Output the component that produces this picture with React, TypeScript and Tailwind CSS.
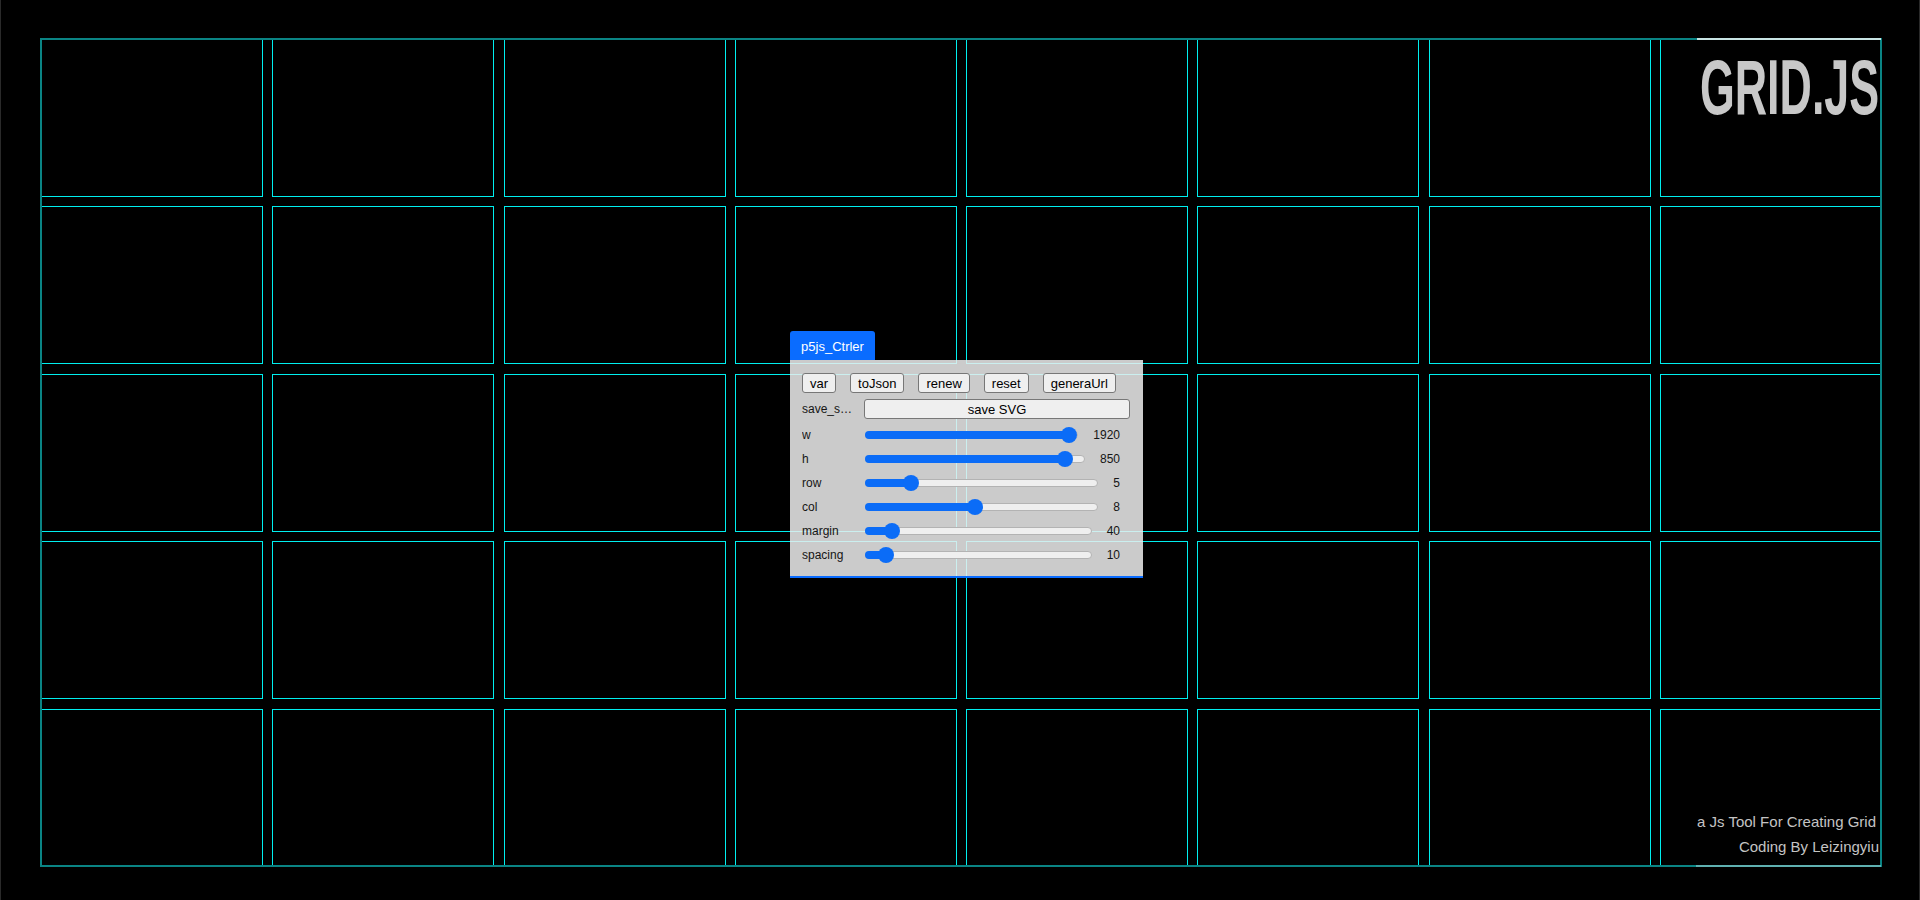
import React from "react";

// grid settings shown in the control panel
const W = 1920;
const MARGIN = 40;
const SPACING = 10;
const COLS = 8;
const ROWS = 5;
const TOP = 39;
const BOTTOM = 866;

const colW = (W - MARGIN * 2 - SPACING * (COLS - 1)) / COLS;
const rowH = (BOTTOM - TOP - SPACING * (ROWS - 1)) / ROWS;

const SLIDERS = [
  { label: "w", value: "1920", frac: 1 },
  { label: "h", value: "850", frac: 0.946 },
  { label: "row", value: "5", frac: 0.171 },
  { label: "col", value: "8", frac: 0.468 },
  { label: "margin", value: "40", frac: 0.086 },
  { label: "spacing", value: "10", frac: 0.057 },
];

const BUTTONS = ["var", "toJson", "renew", "reset", "generaUrl"];

export default function App() {
  return (
    <div className="relative h-[900px] w-[1920px] overflow-hidden border-x border-[#2a2a2a] bg-black font-['Liberation_Sans',Arial,sans-serif]">
      {/* Canvas grid */}
      <GridCanvas />

      {/* Title + credits */}
      <div className="absolute right-[40px] top-[39px] flex h-[827px] w-[190px] flex-col justify-between">
        <div className="mt-[9px] w-max origin-right scale-x-[0.574] self-end whitespace-nowrap text-[78px] font-bold leading-[78px] text-[#c8c8c8]">
          GRID.JS
        </div>
        <div className="pb-[7px] text-right text-[15px] leading-[25px] text-[#c4c4c4]">
          <div className="pr-[3px]">a Js Tool For Creating Grid</div>
          <div>Coding By Leizingyiu</div>
        </div>
      </div>

      {/* Control panel */}
      <div className="absolute left-[789px] top-[331px] w-[353px] text-[12px] text-[#151515]">
        <div className="flex h-[29px] w-[85px] items-center justify-center rounded-t-[3px] bg-[#0a6cff] pt-[3px] text-[13px] text-white">
          p5js_Ctrler
        </div>
        <div className="border-b-2 border-[#0a6cff] bg-[rgba(238,238,238,0.85)] pb-[9px] pl-[12px] pr-[13px] pt-[13px]">
          <div className="flex h-[20px] items-center gap-[14px]">
            {BUTTONS.map((b) => (
              <Btn key={b}>{b}</Btn>
            ))}
          </div>
          <div className="mt-[6px] flex h-[20px] items-center">
            <span className="mr-[10px] w-[52px] whitespace-nowrap">save_s…</span>
            <Btn className="flex-1">save SVG</Btn>
          </div>
          <div className="mt-[4px]">
            {SLIDERS.map((s) => (
              <SliderRow key={s.label} {...s} />
            ))}
          </div>
        </div>
      </div>
    </div>
  );
}

// ---- Helper Components ----

function GridCanvas() {
  const cells: { x: number; y: number }[] = [];
  for (let r = 0; r < ROWS; r++) {
    for (let c = 0; c < COLS; c++) {
      cells.push({
        x: Math.round(MARGIN + c * (colW + SPACING)),
        y: Math.round(TOP + r * (rowH + SPACING)),
      });
    }
  }
  return (
    <svg className="absolute inset-0" width={1920} height={900} shapeRendering="crispEdges">
      {cells.map((cell, i) => (
        <rect
          key={i}
          x={cell.x + 0.5}
          y={cell.y + 0.5}
          width={Math.round(colW)}
          height={Math.round(rowH)}
          fill="none"
          stroke="#00eeee"
          strokeWidth={1}
        />
      ))}
      {/* outer frame looks softer, two pixels wide */}
      <rect x={40} y={39} width={1840} height={827} fill="none" stroke="#0a8484" strokeWidth={2} />
      <line x1={1696} y1={39} x2={1880} y2={39} stroke="#c8e4e4" strokeWidth={2} />
      <line x1={1695} y1={866} x2={1880} y2={866} stroke="#5fb0b0" strokeWidth={2} />
    </svg>
  );
}

function Btn({ children, className = "" }: { children: React.ReactNode; className?: string }) {
  return (
    <button
      className={`flex h-[20px] items-center justify-center rounded-[3px] border border-[#777777] bg-[#efefef] px-[7px] text-[13px] leading-none text-black ${className}`}
    >
      {children}
    </button>
  );
}

function SliderRow({ label, value, frac }: { label: string; value: string; frac: number }) {
  const pos = `calc(8px + ${frac} * (100% - 16px))`;
  return (
    <div className="flex h-[24px] items-center">
      <span className="mr-[11px] w-[52px] truncate">{label}</span>
      <div className="relative h-[8px] flex-1 rounded-full border border-[#b3b3b3] bg-[#efefef]">
        <div
          className="absolute left-[-1px] top-[-1px] h-[8px] rounded-full bg-[#0b6cf7]"
          style={{ width: pos }}
        />
        <div
          className="absolute top-1/2 h-[16px] w-[16px] -translate-x-1/2 -translate-y-1/2 rounded-full bg-[#0b6cf7]"
          style={{ left: pos }}
        />
      </div>
      <span className="ml-[15px] mr-[10px]">{value}</span>
    </div>
  );
}
